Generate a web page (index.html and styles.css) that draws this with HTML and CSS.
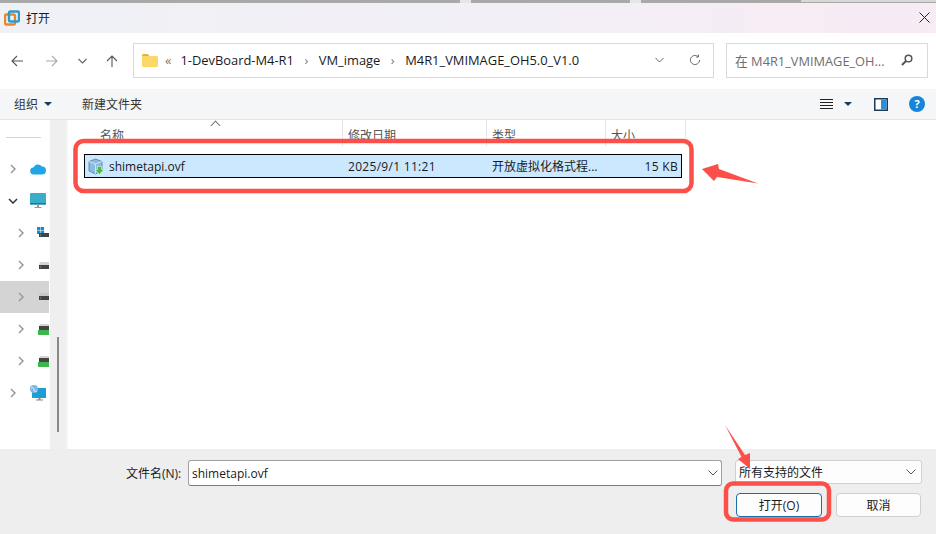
FILE: index.html
```html
<!DOCTYPE html>
<html lang="zh">
<head>
<meta charset="utf-8">
<title>打开</title>
<link rel="stylesheet" href="styles.css">
</head>
<body>
<div class="dialog">
  <div class="strip"><span class="seg s1"></span><span class="seg s2"></span><span class="seg s3"></span><span class="seg s4"></span><span class="seg s5"></span><span class="seg s6"></span></div>
  <header class="titlebar">
    <svg class="logo" width="16" height="16" viewBox="0 0 16 16"><rect x="1" y="4.5" width="10" height="10" rx="1.5" fill="none" stroke="#e8872a" stroke-width="2.4"/><rect x="5" y="1.5" width="10" height="10" rx="1.5" fill="none" stroke="#2a9ad0" stroke-width="2.4"/></svg>
    <span class="title">打开</span>
    <svg class="close" width="11" height="11" viewBox="0 0 11 11"><path d="M.5.5l10 10M10.5.5l-10 10" stroke="#222" stroke-width="1" fill="none"/></svg>
  </header>

  <nav class="addressrow">
    <svg class="nav back" width="12" height="12" viewBox="0 0 12 12"><path d="M12 6H1M6 1L1 6l5 5" fill="none" stroke="#555" stroke-width="1.1"/></svg>
    <svg class="nav fwd" width="12" height="12" viewBox="0 0 12 12"><path d="M0 6h11M6 1l5 5-5 5" fill="none" stroke="#aaa" stroke-width="1.1"/></svg>
    <svg class="nav down" width="9" height="6" viewBox="0 0 9 6"><path d="M.5 1l4 4 4-4" fill="none" stroke="#666" stroke-width="1.1"/></svg>
    <svg class="nav up" width="12" height="12" viewBox="0 0 12 12"><path d="M6 12V1M1 6l5-5 5 5" fill="none" stroke="#555" stroke-width="1.1"/></svg>
    <div class="address">
      <svg class="folder" width="16" height="13" viewBox="0 0 16 13"><path d="M0 1.500A1.500 1.500 0 0 1 1.500 0h4l2 2h7A1.500 1.500 0 0 1 16 3.500v8a1.500 1.500 0 0 1-1.500 1.500h-13A1.500 1.500 0 0 1 0 11.500z" fill="#fbd768"/><path d="M0 1.500A1.500 1.500 0 0 1 1.500 0h4l2 2H0z" fill="#e9b13c"/></svg>
      <span class="crumb-sep first">«</span>
      <span class="crumb">1-DevBoard-M4-R1</span><span class="crumb-sep">›</span>
      <span class="crumb">VM_image</span><span class="crumb-sep">›</span>
      <span class="crumb">M4R1_VMIMAGE_OH5.0_V1.0</span>
      <svg class="addr-down" width="9" height="6" viewBox="0 0 9 6"><path d="M.5 1l4 4 4-4" fill="none" stroke="#666" stroke-width="1"/></svg>
      <svg class="refresh" width="12" height="12" viewBox="0 0 13 13"><path d="M11.500 6.500a5 5 0 1 1-1.600-3.700M10.300 .5v2.800H7.500" fill="none" stroke="#666" stroke-width="1"/></svg>
    </div>
    <div class="search">
      <span class="search-text">在 M4R1_VMIMAGE_OH...</span>
      <svg width="12" height="12" viewBox="0 0 12 12"><circle cx="7.500" cy="4.500" r="3.300" fill="none" stroke="#555" stroke-width="1.500"/><path d="M5 7l-4 4" stroke="#555" stroke-width="2"/></svg>
    </div>
  </nav>

  <div class="toolbar">
    <span class="tool">组织</span><span class="caret"></span>
    <span class="tool newfolder">新建文件夹</span>
    <svg class="viewicon" width="13" height="11" viewBox="0 0 13 11"><path d="M0 .5h13M0 3.500h13M0 6.500h13M0 9.500h13" stroke="#222" stroke-width="1"/></svg>
    <span class="caret dark"></span>
    <svg class="pane" width="14" height="13" viewBox="0 0 14 13"><rect x=".75" y=".75" width="12.500" height="11.500" fill="#fff" stroke="#1d3a57" stroke-width="1.500"/><rect x="7" y="1.500" width="5.500" height="10" fill="#2d8fd8"/></svg>
    <span class="help">?</span>
  </div>

  <main class="main">
    <aside class="sidebar">
      <div class="side-sep"></div>
      <ul class="tree">
        <li class="node l0"><svg class="chev" width="6" height="10" viewBox="0 0 6 10"><path d="M1 1l4 4-4 4" fill="none" stroke="#999" stroke-width="1.500"/></svg>
          <svg width="16" height="12" viewBox="0 0 16 12"><path d="M4 11.500a3.500 3.500 0 0 1-.6-7A5 5 0 0 1 12 3.500a4 4 0 0 1 0 8z" fill="#1fa6e6"/></svg></li>
        <li class="node l0"><svg class="chev open" width="10" height="6" viewBox="0 0 10 6"><path d="M1 1l4 4 4-4" fill="none" stroke="#333" stroke-width="1.500"/></svg>
          <svg width="16" height="16" viewBox="0 0 16 16"><rect x="0" y="0" width="16" height="11.500" rx="1" fill="#38aeca"/><rect x="0" y="10" width="16" height="1.500" fill="#1c7c96"/><path d="M7 11.500h2v2.500H7zM4.500 14h7v1h-7z" fill="#999"/></svg></li>
        <li class="node l1"><svg class="chev" width="6" height="10" viewBox="0 0 6 10"><path d="M1 1l4 4-4 4" fill="none" stroke="#999" stroke-width="1.500"/></svg>
          <svg width="12" height="13" viewBox="0 0 12 13"><path d="M0 0h3.300v3.300H0zM3.800 0h3.300v3.300H3.800zM0 3.800h3.300v3.300H0zM3.800 3.800h3.300v3.300H3.800z" fill="#1e88d8"/><rect x="2" y="6" width="10" height="4" fill="#444"/><rect x="3" y="7.500" width="1" height="1" fill="#5c5"/></svg></li>
        <li class="node l1"><svg class="chev" width="6" height="10" viewBox="0 0 6 10"><path d="M1 1l4 4-4 4" fill="none" stroke="#999" stroke-width="1.500"/></svg>
          <svg width="12" height="13" viewBox="0 0 12 13"><path d="M3 3h9v3H2z" fill="#d5d5d5"/><rect x="2" y="6" width="10" height="4" fill="#444"/><rect x="3" y="7.500" width="1" height="1" fill="#5c5"/></svg></li>
        <li class="node l1 selected"><svg class="chev" width="6" height="10" viewBox="0 0 6 10"><path d="M1 1l4 4-4 4" fill="none" stroke="#999" stroke-width="1.500"/></svg>
          <svg width="12" height="13" viewBox="0 0 12 13"><path d="M3 2h9v3H2z" fill="#c8c8c8"/><rect x="2" y="5" width="10" height="4" fill="#444"/><rect x="3" y="6.500" width="1" height="1" fill="#5c5"/></svg></li>
        <li class="node l1"><svg class="chev" width="6" height="10" viewBox="0 0 6 10"><path d="M1 1l4 4-4 4" fill="none" stroke="#999" stroke-width="1.500"/></svg>
          <svg width="12" height="13" viewBox="0 0 12 13"><path d="M3 1h9v2H2z" fill="#d5d5d5"/><rect x="2" y="3" width="10" height="4" fill="#444"/><rect x="1" y="7" width="11" height="5" fill="#3db54a"/></svg></li>
        <li class="node l1"><svg class="chev" width="6" height="10" viewBox="0 0 6 10"><path d="M1 1l4 4-4 4" fill="none" stroke="#999" stroke-width="1.500"/></svg>
          <svg width="12" height="13" viewBox="0 0 12 13"><path d="M3 1h9v2H2z" fill="#d5d5d5"/><rect x="2" y="3" width="10" height="4" fill="#444"/><rect x="1" y="7" width="11" height="5" fill="#3db54a"/></svg></li>
        <li class="node l0"><svg class="chev" width="6" height="10" viewBox="0 0 6 10"><path d="M1 1l4 4-4 4" fill="none" stroke="#999" stroke-width="1.500"/></svg>
          <svg width="16" height="16" viewBox="0 0 16 16"><rect x="2" y="3" width="14" height="10" fill="#1f9bd6"/><path d="M8.500 13h2v1.500h-2zM6 14.500h7v1H6z" fill="#888"/><circle cx="4" cy="4" r="4" fill="#7fb6e6"/><path d="M1 3c2-1 3 0 3 2s1 2 3 1" stroke="#d7ecff" fill="none"/></svg></li>
      </ul>
    </aside>
    <div class="scrolltrack"><span class="thumb"></span></div>
    <section class="files">
      <div class="sort-caret"></div>
      <div class="headers">
        <span class="col c-name">名称</span><span class="col c-date">修改日期</span><span class="col c-type">类型</span><span class="col c-size">大小</span>
      </div>
      <div class="row">
        <span class="r-name">
          <svg width="16" height="17" viewBox="0 0 16 17"><path d="M1 3.500L7.500 1 14 3.500v9L7.500 16 1 13z" fill="#8dbbe0" stroke="#4f7fa8" stroke-width=".8"/><path d="M1 3.500L7.500 6 14 3.500M7.500 6v10" fill="none" stroke="#dceefb" stroke-width=".8"/><path d="M9.500 8.500h4v3H16L11.500 16.500 7 11.500h2.500z" fill="#4fb83f" stroke="#fff" stroke-width=".5"/></svg>
          shimetapi.ovf</span>
        <span class="r-date">2025/9/1 11:21</span>
        <span class="r-type">开放虚拟化格式程...</span>
        <span class="r-size">15 KB</span>
      </div>
    </section>
  </main>

  <footer class="footer">
    <div class="form-row">
      <label class="fname-label">文件名(N):</label>
      <div class="fname-input"><span>shimetapi.ovf</span><svg width="10" height="6" viewBox="0 0 10 6"><path d="M.5.500l4.500 4.500 4.500-4.500" fill="none" stroke="#555"/></svg></div>
      <div class="ftype"><span>所有支持的文件</span><svg width="10" height="6" viewBox="0 0 10 6"><path d="M.5.500l4.500 4.500 4.500-4.500" fill="none" stroke="#555"/></svg></div>
    </div>
    <div class="buttons">
      <button class="btn primary">打开(O)</button>
      <button class="btn cancel">取消</button>
    </div>
  </footer>

  <svg class="annot" width="936" height="534" viewBox="0 0 936 534">
    <rect x="75.500" y="141" width="616" height="50" rx="8" fill="none" stroke="#fb4f4a" stroke-width="4.500"/>
    <rect x="726" y="483.500" width="103" height="36" rx="7" fill="none" stroke="#fb4f4a" stroke-width="4.500"/>
    <path d="M702 169L718 164L719 169L758 183.500L717 177L714 181Z" fill="#fb4f4a"/>
    <path d="M725 425L745 455L750 453L750 469L738 459L741.500 457Z" fill="#fb4f4a"/>
  </svg>
</div>
</body>
</html>
```
FILE: styles.css
```css
* { box-sizing: border-box; }
html, body { margin: 0; padding: 0; }
body { width: 936px; height: 534px; overflow: hidden; background: #fff; font-family: "Open Sans", "Noto Sans CJK SC", sans-serif; font-size: 12px; color: #1a1a1a; }
.dialog { position: relative; width: 936px; height: 534px; display: flex; flex-direction: column; }

.strip { height: 3px; display: flex; background: #eee; }
.seg { display: block; height: 3px; background: #a9a9a9; }
.s1 { width: 460px; }
.s2 { width: 11px; background: #e6e6e6; }
.s3 { width: 159px; }
.s4 { width: 11px; background: #e6e6e6; }
.s5 { width: 160px; }
.s6 { flex: 1; background: #d8d8d8; border-bottom: 1px solid #a9a9a9; }

.titlebar { height: 30px; display: flex; align-items: center; padding: 0 6px 1px 4px; background: linear-gradient(90deg, #eff1f5 0%, #f2eff6 50%, #f7ebf4 100%); }
.logo { margin-right: 6px; }
.title { flex: 1; }

.addressrow { height: 56px; display: flex; align-items: center; background: #fff; padding: 0 0 1px 11px; }
.nav { flex: none; }
.fwd { margin-left: 23px; }
.down { margin-left: 20px; }
.up { margin-left: 19px; margin-right: 15px; }
.address { width: 581px; height: 35px; border: 1px solid #d9d9d9; display: flex; align-items: center; padding: 0 0 1px 8px; font-size: 12.9px; }
.folder { margin-right: 7px; }
.crumb { white-space: nowrap; }
.crumb-sep { color: #777; margin: 0 10.5px; }
.crumb-sep.first { margin: 0 9px 0 0; }
.addr-down { margin-left: auto; }
.refresh { margin: 0 12px 0 25px; }
.search { width: 202px; height: 35px; margin-left: 12px; border: 1px solid #d9d9d9; display: flex; align-items: center; justify-content: space-between; padding: 0 14px 1px 8px; color: #6e6e6e; font-size: 12.8px; }

.toolbar { height: 31px; display: flex; align-items: center; background: #f5f6f7; border-bottom: 1px solid #e5e5e5; padding: 0 11px 0 14px; }
.tool { color: #333; }
.caret { width: 0; height: 0; margin-left: 6px; border: 4px solid transparent; border-top: 4px solid #1d3a57; border-bottom: 0; }
.newfolder { margin-left: 30px; margin-right: auto; }
.viewicon { margin-right: 11px; }
.caret.dark { margin-left: 0; }
.pane { margin-left: 22px; }
.help { width: 16px; height: 16px; margin-left: 21px; border-radius: 50%; background: #1684d8; color: #fff; font: bold 11px/16px "Open Sans", sans-serif; text-align: center; }

.main { flex: 1; display: flex; min-height: 0; background: #fff; }
.sidebar { width: 50px; flex: none; padding: 17px 1px 0 0; overflow: hidden; }
.side-sep { width: 35px; height: 1px; margin-left: 6px; background: #d4d4d4; }
.tree { list-style: none; margin: 15px 0 0; padding: 0; }
.node { height: 32px; display: flex; align-items: center; overflow: hidden; }
.node svg { flex: none; }
.l0 { padding-left: 10px; }
.l0 .chev { margin-right: 14px; }
.l0 .chev.open { margin-left: -2px; margin-right: 12px; }
.l1 { padding-left: 18px; }
.l1 .chev { margin-right: 13px; }
.selected { background: #d4d4d4; }

.scrolltrack { width: 16px; flex: none; background: #efefef; padding: 217px 0 0 7px; }
.thumb { display: block; width: 2px; height: 95px; background: #8a8a8a; }

.files { flex: 1; position: relative; border-left: 2px solid #f6f6f6; }
.sort-caret { position: absolute; left: 144px; top: 0; width: 7px; height: 7px; border-left: 1px solid #777; border-top: 1px solid #777; transform: rotate(45deg); margin-top: 2px; }
.headers { height: 26px; display: flex; color: #555; }
.col { border-right: 1px solid #e5e5e5; padding: 6px 0 0 5px; flex: none; }
.c-name { width: 275px; padding-left: 32px; }
.c-date { width: 144px; }
.c-type { width: 119px; }
.c-size { width: 80px; }
.row { width: 598px; height: 24px; margin: 8px 0 0 16px; background: #cce8ff; border: 1px solid #000; display: flex; align-items: center; }
.r-name { width: 263px; flex: none; padding-left: 3px; display: flex; align-items: center; gap: 5px; }
.r-date { width: 144px; flex: none; letter-spacing: .3px; }
.r-type { width: 124px; flex: none; }
.r-size { flex: 1; text-align: right; padding-right: 3px; letter-spacing: .3px; }

.footer { height: 85px; background: #eeeeee; padding: 11px 14px 0 126px; display: flex; flex-direction: column; }
.form-row { display: flex; align-items: flex-start; }
.fname-label { width: 62px; line-height: 27px; }
.fname-input { width: 534px; height: 26px; background: #fff; border: 1px solid #a0a0a0; border-bottom-color: #7a7a7a; border-radius: 3px; display: flex; align-items: center; justify-content: space-between; padding: 0 3px; }
.ftype { width: 187px; height: 24px; margin-left: 13px; padding: 0 5px 0 3px; background: #fdfdfd; border: 1px solid #d0d0d0; border-radius: 3px; display: flex; align-items: center; justify-content: space-between; line-height: 25px; }
.buttons { display: flex; justify-content: flex-end; gap: 14px; margin-top: 6px; }
.btn { width: 86px; height: 24px; padding: 0; background: #fdfdfd; border: 1px solid #d0d0d0; border-radius: 4px; font: inherit; color: inherit; }
.cancel { width: 85px; margin-right: 1px; }
.primary { border: 1.5px solid #1a6da8; }

.annot { position: absolute; left: 0; top: 0; pointer-events: none; }
```
